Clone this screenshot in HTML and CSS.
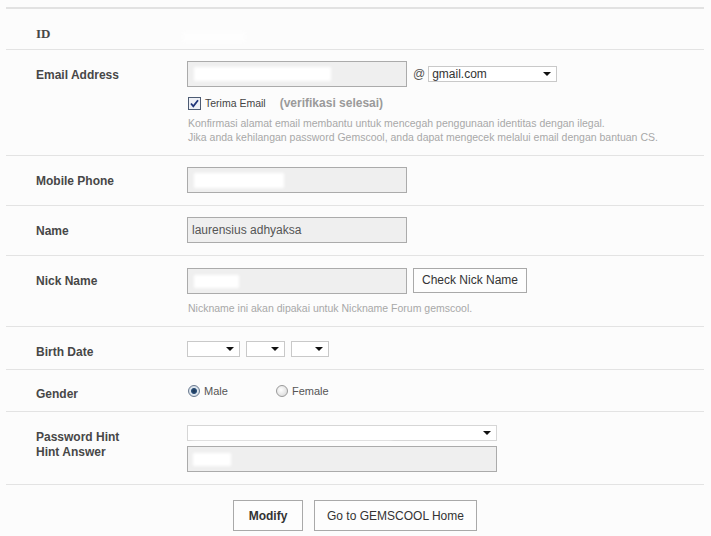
FILE: index.html
```html
<!DOCTYPE html>
<html lang="id">
<head>
    <meta charset="UTF-8">
    <meta name="viewport" content="width=device-width, initial-scale=1.0">
    <title>Modify Profile</title>
    <link rel="stylesheet" href="styles.css">
</head>
<body>
    <div class="profile">
        <div class="row row-id">
            <div class="label">ID</div>
            <div class="value"><span class="hidden id-hidden"></span></div>
        </div>
        <div class="row row-email">
            <div class="label">Email Address</div>
            <div class="value">
                <div class="inline">
                    <div class="field field-email"><span class="hidden email-hidden"></span></div>
                    <span class="at">@</span>
                    <div class="select select-domain">gmail.com<span class="arrow"></span></div>
                </div>
                <div class="check-line">
                    <span class="checkbox">
                        <svg width="13" height="13" viewBox="0 0 13 13">
                            <rect x="0.5" y="0.5" width="12" height="12" fill="#eef0f6" stroke="#4d5b73"/>
                            <path d="M3 6.5 L5.3 9.3 L10 3.2" fill="none" stroke="#20357a" stroke-width="1.8"/>
                        </svg>
                    </span>
                    <span class="check-text">Terima Email</span>
                    <span class="verified">(verifikasi selesai)</span>
                </div>
                <p class="help">Konfirmasi alamat email membantu untuk mencegah penggunaan identitas dengan ilegal.<br>Jika anda kehilangan password Gemscool, anda dapat mengecek melalui email dengan bantuan CS.</p>
            </div>
        </div>
        <div class="row row-mobile">
            <div class="label">Mobile Phone</div>
            <div class="value">
                <div class="field field-short"><span class="hidden mobile-hidden"></span></div>
            </div>
        </div>
        <div class="row row-name">
            <div class="label">Name</div>
            <div class="value">
                <div class="field field-short">laurensius adhyaksa</div>
            </div>
        </div>
        <div class="row row-nick">
            <div class="label">Nick Name</div>
            <div class="value">
                <div class="inline">
                    <div class="field field-email"><span class="hidden nick-hidden"></span></div>
                    <button class="btn btn-check">Check Nick Name</button>
                </div>
                <p class="help help-nick">Nickname ini akan dipakai untuk Nickname Forum gemscool.</p>
            </div>
        </div>
        <div class="row row-birth">
            <div class="label">Birth Date</div>
            <div class="value inline">
                <div class="select select-year"><span class="arrow"></span></div>
                <div class="select select-month"><span class="arrow"></span></div>
                <div class="select select-day"><span class="arrow"></span></div>
            </div>
        </div>
        <div class="row row-gender">
            <div class="label">Gender</div>
            <div class="value inline">
                <span class="radio-item radio-male"><span class="radio radio-on"></span>Male</span>
                <span class="radio-item"><span class="radio"></span>Female</span>
            </div>
        </div>
        <div class="row row-hint">
            <div class="label">Password Hint<br>Hint Answer</div>
            <div class="value">
                <div class="select select-hint"><span class="hidden hint-hidden"></span><span class="arrow"></span></div>
                <div class="field field-hint"><span class="hidden answer-hidden"></span></div>
            </div>
        </div>
    </div>
    <div class="actions">
        <button class="btn btn-modify">Modify</button>
        <button class="btn btn-home">Go to GEMSCOOL Home</button>
    </div>
</body>
</html>
```

FILE: styles.css
```css
body {
    margin: 0;
    background-color: #fcfcfc;
    font-family: "Liberation Sans", Arial, sans-serif;
    font-size: 12px;
    color: #444;
}
.profile {
    margin: 7px 7px 0 6px;
    border-top: 2px solid #e2e2e2;
}
.row {
    display: grid;
    grid-template-columns: 181px 1fr;
    align-items: start;
    border-bottom: 1px solid #e3e3e3;
    padding-top: 11px;
    box-sizing: border-box;
}
.label {
    padding-left: 30px;
    margin-top: 6px;
    font-weight: bold;
    line-height: 16px;
    color: #474747;
}
.row-id { height: 41px; }
.row-id .label { font-family: "Liberation Serif", serif; font-size: 13px; }
.row-email { height: 106px; }
.row-mobile { height: 50px; }
.row-name { height: 50px; }
.row-nick { height: 71px; padding-top: 12px; }
.row-nick .label { margin-top: 5px; }
.row-birth { height: 43px; padding-top: 14px; }
.row-birth .label { margin-top: 3px; }
.row-gender { height: 42px; padding-top: 14px; }
.row-gender .label { margin-top: 2px; }
.row-hint { height: 73px; padding-top: 13px; }
.row-hint .label { margin-top: 5px; line-height: 15px; }
.value {
    position: relative;
}
.inline {
    display: flex;
    align-items: center;
}
.field {
    position: relative;
    height: 26px;
    box-sizing: border-box;
    border: 1px solid #ababab;
    background-color: #efefef;
    padding: 0 4px;
    line-height: 24px;
    color: #555;
}
.field-email { width: 220px; }
.field-short { width: 220px; }
.field-hint { width: 310px; margin-top: 5px; }
.hidden {
    position: absolute;
    background-color: #fff;
    filter: blur(1.5px);
}
.id-hidden { left: -4px; top: 12px; width: 62px; height: 10px; opacity: 0.7; }
.email-hidden { left: 6px; top: 5px; width: 137px; height: 14px; }
.mobile-hidden { left: 6px; top: 5px; width: 90px; height: 15px; }
.nick-hidden { left: 6px; top: 6px; width: 45px; height: 13px; }
.hint-hidden { left: 4px; top: 5px; width: 200px; height: 9px; opacity: 0.6; }
.answer-hidden { left: 5px; top: 6px; width: 38px; height: 13px; }
.at {
    margin: 0 3px 0 6px;
    color: #555;
}
.select {
    position: relative;
    height: 16px;
    box-sizing: border-box;
    border: 1px solid #c9c9c9;
    background-color: #fff;
    padding-left: 3px;
    line-height: 14px;
    font-size: 12px;
    color: #333;
}
.select-domain { width: 129px; }
.select-year { width: 53px; }
.select-month { width: 39px; margin-left: 6px; }
.select-day { width: 38px; margin-left: 6px; }
.select-hint { width: 310px; border-color: #d6d6d6; }
.arrow {
    position: absolute;
    right: 5px;
    top: 5px;
    border-left: 4px solid transparent;
    border-right: 4px solid transparent;
    border-top: 4px solid #111;
}
.check-line {
    display: flex;
    align-items: center;
    margin-top: 8px;
    height: 16px;
    font-size: 10.5px;
}
.checkbox {
    display: inline-flex;
    margin-left: 1px;
    margin-right: 4px;
}
.check-text {
    color: #444;
}
.verified {
    margin-left: 14px;
    font-weight: bold;
    font-size: 12px;
    color: #9a9a9a;
}
.help {
    margin: 5px 0 0 1px;
    font-size: 10.5px;
    line-height: 14px;
    color: #a8a8a8;
}
.help-nick { margin-top: 7px; }
.btn {
    font-family: "Liberation Sans", Arial, sans-serif;
    font-size: 12px;
    color: #333;
    background-color: #fdfdfd;
    border: 1px solid #a9a9a9;
    padding: 0;
    cursor: pointer;
}
.btn-check {
    width: 114px;
    height: 25px;
    margin-left: 6px;
    margin-top: -2px;
}
.radio-item {
    display: inline-flex;
    align-items: center;
    height: 14px;
    font-size: 11px;
    color: #555;
}
.radio-male { width: 88px; }
.radio {
    display: inline-block;
    width: 10px;
    height: 10px;
    border-radius: 50%;
    border: 1px solid #9a9a9a;
    background: radial-gradient(circle at 40% 40%, #fff, #d4d4d4);
    margin: 0 4px 0 1px;
    box-sizing: content-box;
}
.radio-on {
    border-color: #6a7a90;
    background: radial-gradient(circle, #1b3350 0, #2b4f78 2.5px, #dfe7ef 3.5px, #c9d2dc 100%);
}
.actions {
    display: flex;
    justify-content: center;
    gap: 11px;
    margin-top: 15px;
    padding-right: 1px;
}
.btn-modify {
    width: 70px;
    height: 31px;
    font-weight: bold;
}
.btn-home {
    width: 163px;
    height: 31px;
}
```
